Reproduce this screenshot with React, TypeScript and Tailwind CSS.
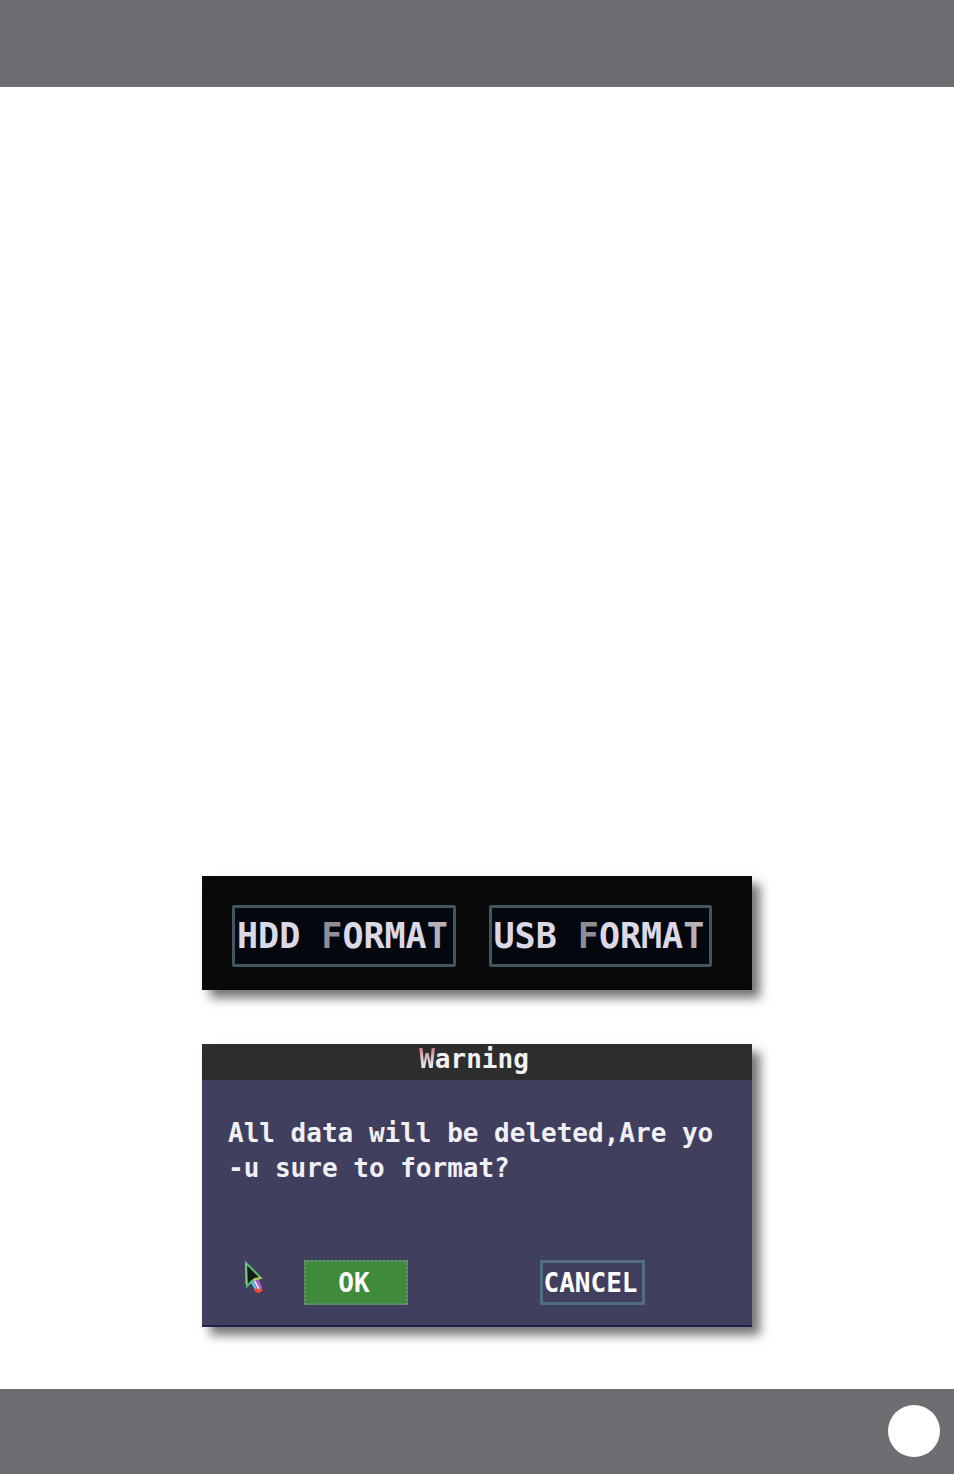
import type { ReactNode } from 'react';

function FormatButton({ device }: { device: string }) {
    return (
        <button
            type="button"
            className="flex h-[62px] flex-1 items-center justify-start whitespace-pre rounded-xs border-3 border-[#41585a] bg-[#05070f] pl-0.5 text-[35px] leading-none font-bold text-[#dcd9e6]"
        >
            {device} <span className="text-[#8f8d96]">F</span>ORMA<span className="text-[#b5b2b5]">T</span>
        </button>
    );
}

function Panel({ className, children }: { className: string; children: ReactNode }) {
    return (
        <section className={`w-full max-w-[550px] shadow-[8px_8px_10px_rgba(0,0,0,0.55)] ${className}`}>
            {children}
        </section>
    );
}

function Pointer() {
    return (
        <svg className="h-9 w-5 shrink-0" viewBox="0 0 20 36" fill="none" aria-hidden="true">
            <path d="M6 21 L14 18 L18 27 L17 31 L13 32 L10 28 Z" fill="#7a5ba8" />
            <path d="M7 21 L12 29" stroke="#55d5e8" strokeWidth="2" />
            <path d="M10 20 L15 29" stroke="#e9dcf0" strokeWidth="2" />
            <path d="M13 19 L17 28" stroke="#c05be0" strokeWidth="2" />
            <path d="M11 29 Q14 34 18 29" stroke="#f04a35" strokeWidth="3" />
            <path d="M2 3 L17 18 L9 20 L3 26 Z" fill="#101b14" stroke="#58bd6c" strokeWidth="2" />
            <path d="M2 4 V24" stroke="#a5cfa5" strokeWidth="1" />
            <path d="M10 19 L17 18" stroke="#c5c35f" strokeWidth="2" />
        </svg>
    );
}

export default function App() {
    return (
        <div className="flex min-h-screen flex-col bg-white font-['DejaVu_Sans_Mono',monospace]">
            <header className="h-[87px] bg-[#6d6e71]" />

            <main className="flex flex-1 flex-col items-center justify-end gap-[54px] pb-[62px]">
                <Panel className="flex gap-[33px] bg-[#090909] pt-[29px] pr-10 pb-[23px] pl-[30px]">
                    <FormatButton device="HDD" />
                    <FormatButton device="USB" />
                </Panel>

                <Panel className="border-b-2 border-[#25204a] bg-[#413f5e] text-white">
                    <h1 className="h-9 bg-[#2d2d2d] pr-1.5 text-center text-[26px] leading-[30px] font-bold text-[#f2f2f2]">
                        <span className="bg-linear-to-b from-[#c9606a] via-[#d9c8cc] to-white bg-clip-text text-transparent">W</span>arning
                    </h1>
                    <p className="h-[180px] pt-9 pl-[26px] text-[26px] leading-[35px] font-bold whitespace-pre text-[#f0f0f5]">
                        {'All data will be deleted,Are yo\n-u sure to format?'}
                    </p>
                    <div className="flex h-[65px] pl-[42px]">
                        <Pointer />
                        <button
                            type="button"
                            className="ml-10 h-[45px] w-[104px] border-2 border-dotted border-[#6f8f86] bg-[#3f8a3b] pr-1 text-[26px] leading-none font-bold"
                        >
                            OK
                        </button>
                        <button
                            type="button"
                            className="ml-[132px] h-[45px] w-[105px] border-3 border-[#526b86] pr-1 text-[26px] leading-none font-bold"
                        >
                            CANCEL
                        </button>
                    </div>
                </Panel>
            </main>

            <footer className="flex h-[85px] items-center justify-end bg-[#6d6e71] pr-[14px] pb-0.5">
                <span className="size-[52px] rounded-full bg-white" />
            </footer>
        </div>
    );
}
